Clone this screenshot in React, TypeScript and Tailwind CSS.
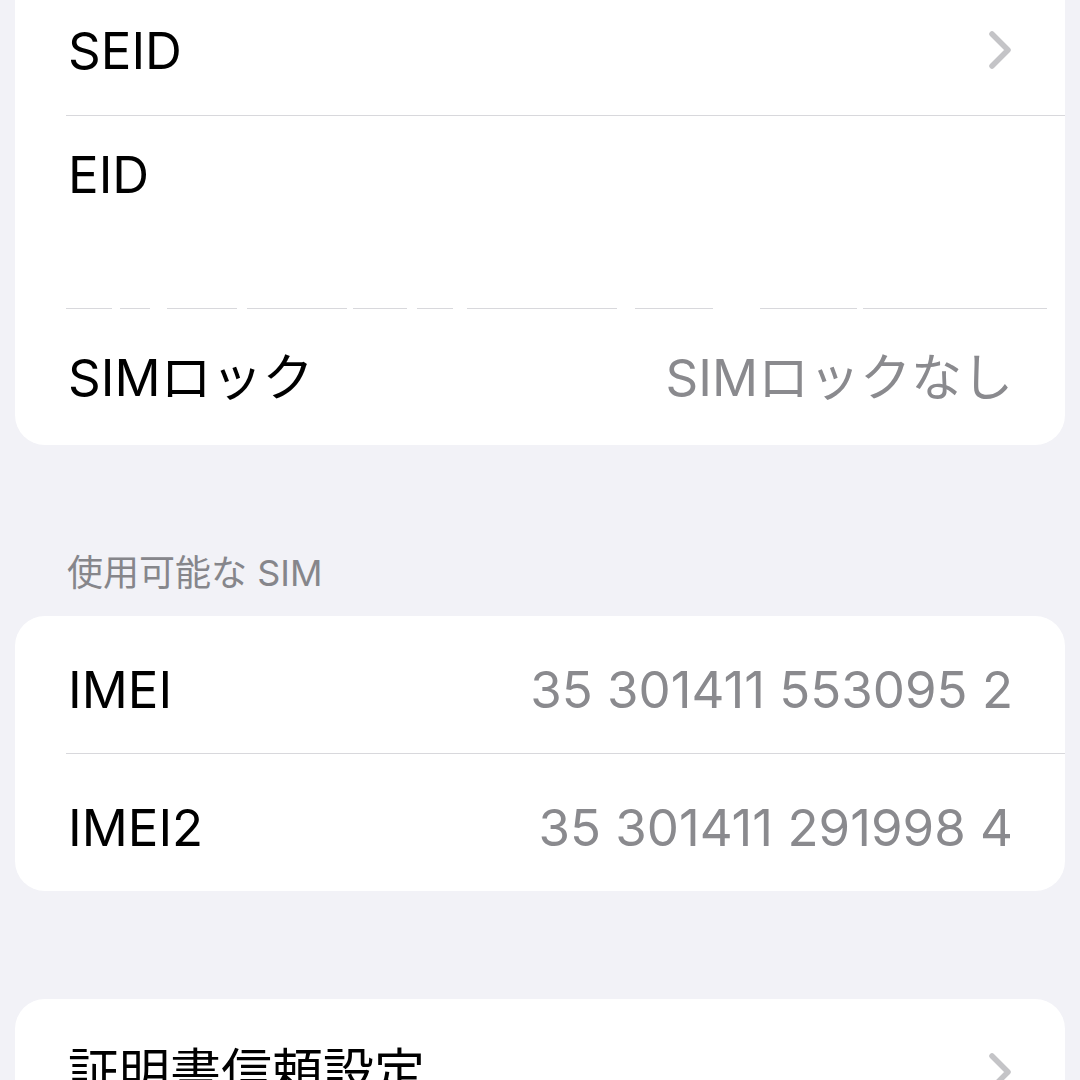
const font = { fontFamily: 'Inter, "Noto Sans CJK JP", sans-serif' };

function Chevron() {
  return (
    <svg width="26" height="40" viewBox="0 0 26 40" className="shrink-0">
      <path d="M5 4 L21 20 L5 36" fill="none" stroke="#c4c4c7" strokeWidth="5.5" strokeLinecap="round" strokeLinejoin="round" />
    </svg>
  );
}

function Divider() {
  return <div className="ml-[51px] h-px bg-[#d8d8dc]" />;
}

function Row({ label, value, chevron, className = "" }: { label: string; value?: string; chevron?: boolean; className?: string }) {
  return (
    <div className={`flex items-center justify-between pl-[53px] pr-[52px] ${className}`}>
      <span className="text-[51px] text-black leading-none">{label}</span>
      {value && <span className="text-[51px] text-[#8a8a8e] leading-none">{value}</span>}
      {chevron && <Chevron />}
    </div>
  );
}

// divider under the redacted EID, broken up by the white blur
const brokenSegments = [
  [66, 112],
  [120, 150],
  [167, 237],
  [247, 347],
  [353, 407],
  [417, 453],
  [467, 617],
  [635, 713],
  [760, 857],
  [863, 1047],
];

export default function App() {
  return (
    <div className="h-[1080px] w-[1080px] overflow-hidden bg-[#f2f2f7]" style={font}>
      <div className="mx-[15px] rounded-b-[30px] bg-white">
        <Row label="SEID" chevron className="h-[115px] pb-[15px] pr-[48px]" />
        <Divider />
        <div className="h-[192px] pl-[53px] pt-[33px]">
          <span className="text-[51px] text-black leading-none">EID</span>
        </div>
        <div className="relative h-px">
          {brokenSegments.map(([a, b]) => (
            <div key={a} className="absolute top-0 h-px bg-[#d8d8dc]" style={{ left: a - 15, width: b - a }} />
          ))}
        </div>
        <Row label="SIMロック" value="SIMロックなし" className="h-[136px]" />
      </div>

      <div className="pl-[67px] pt-[107px] pb-[22px] text-[36px] leading-[42px] text-[#86868b]">
        使用可能な SIM
      </div>

      <div className="mx-[15px] rounded-[30px] bg-white">
        <Row label="IMEI" value="35 301411 553095 2" className="h-[137px] pt-[9px]" />
        <Divider />
        <Row label="IMEI2" value="35 301411 291998 4" className="h-[137px] pt-[9px]" />
      </div>

      <div className="mx-[15px] mt-[108px] rounded-[30px] bg-white">
        <Row label="証明書信頼設定" chevron className="h-[137px] pt-[9px] pr-[48px]" />
      </div>
    </div>
  );
}
